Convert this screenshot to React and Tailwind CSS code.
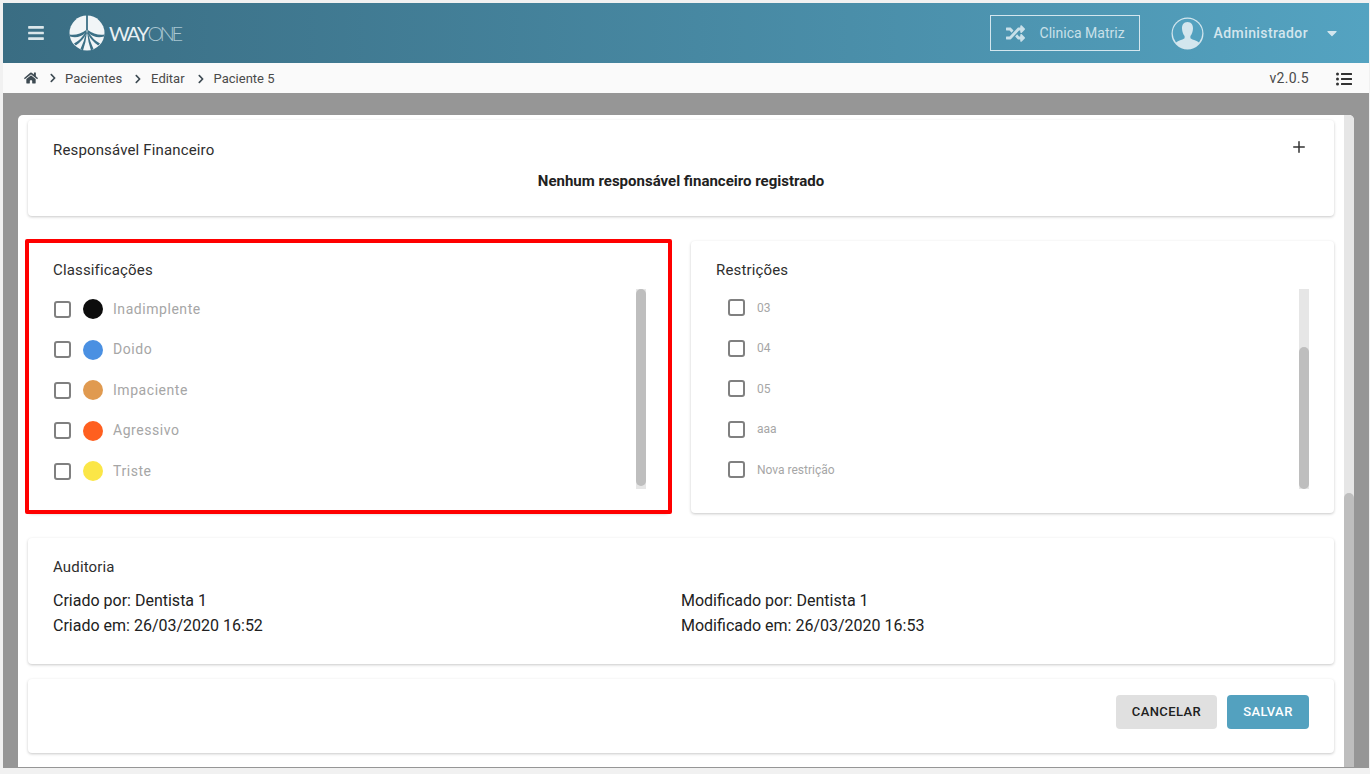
import { Plus } from 'lucide-react';
import { FaBars, FaHome, FaRandom, FaListUl, FaCaretDown, FaChevronRight } from 'react-icons/fa';

const classificacoes = [
  { name: 'Inadimplente', color: 'bg-[#0d0d0d]' },
  { name: 'Doido', color: 'bg-[#4a90e2]' },
  { name: 'Impaciente', color: 'bg-[#e09a50]' },
  { name: 'Agressivo', color: 'bg-[#ff5f1f]' },
  { name: 'Triste', color: 'bg-[#fbe647]' },
];

const restricoes = ['03', '04', '05', 'aaa', 'Nova restrição'];

const Logo = () => (
  <div className="flex items-center">
    <svg width="36" height="36" viewBox="0 0 36 36">
      <circle cx="18" cy="18" r="17.5" fill="#f1f5f7" />
      <path d="M17.1 0 H18.9 V15 H17.1 Z" fill="#3c7086" />
      <path d="M18 14.5 Q9 21 0.5 19.5 L1 21.5 Q10 24 17 17.5 Z" fill="#3c7086" />
      <path d="M18 14.5 Q27 21 35.5 19.5 L35 21.5 Q26 24 19 17.5 Z" fill="#3c7086" />
      <path d="M17.3 16 Q12 25 5 28.5 L6.8 30.5 Q14 25.5 17.7 18 Z" fill="#3c7086" />
      <path d="M18.7 16 Q24 25 31 28.5 L29.2 30.5 Q22 25.5 18.3 18 Z" fill="#3c7086" />
      <path d="M17.3 17 Q15 27 11.5 34 L14 35.5 Q17 27 17.8 18 Z" fill="#3c7086" />
      <path d="M18.7 17 Q21 27 24.5 34 L22 35.5 Q19 27 18.2 18 Z" fill="#3c7086" />
    </svg>
    <span className="ml-[4px] font-['Lato',sans-serif] text-[20px] leading-none tracking-[-2px] text-[#e9f0f3]">WAY</span>
    <span className="font-['Lato',sans-serif] font-light text-[20px] leading-none tracking-[-3.5px] text-[#a9c6d2]">ONE</span>
  </div>
);

const Avatar = () => (
  <svg width="33" height="33" viewBox="0 0 33 33">
    <circle cx="16.5" cy="16.5" r="16" fill="#d3e6ee" />
    <path
      d="M16.5 5 C12.5 5 10.8 8.2 11 11.7 C11.2 14.8 12.3 17.4 13.6 18.9 L13.6 21.2 C11 23 7.2 23.6 5 25.4 A14.8 14.8 0 0 1 1.7 16.5 A14.8 14.8 0 0 1 31.3 16.5 A14.8 14.8 0 0 1 28 25.4 C25.8 23.6 22 23 19.4 21.2 L19.4 18.9 C20.7 17.4 21.8 14.8 22 11.7 C22.2 8.2 20.5 5 16.5 5 Z"
      fill="#53a1bf"
    />
  </svg>
);

const Card = ({ className, children }) => (
  <div className={`bg-white rounded-[4px] shadow-[0_1px_3px_rgba(0,0,0,0.22)] ${className}`}>{children}</div>
);

const Checkbox = () => (
  <span className="block w-[17px] h-[17px] shrink-0 border-2 border-[#808080] rounded-[3px]" />
);

const Crumb = () => <FaChevronRight className="ml-[11px] text-[#3d4a52]" size={10} />;

export default function App() {
  return (
    <div className="w-[1370px] h-[774px] overflow-hidden bg-[#f1f1f1] pt-[3px] pl-[3px] pr-px pb-[6px] flex flex-col font-['Roboto',sans-serif]">
      <header className="h-[60px] shrink-0 flex items-center bg-gradient-to-r from-[#3a6d83] to-[#54a3c1]">
        <FaBars className="ml-[24px] text-[#dbe6ea]" size={18} />
        <div className="ml-[24px]">
          <Logo />
        </div>
        <div className="ml-auto flex items-center">
          <div className="w-[150px] h-[36px] border border-[#d3e6ee] flex items-center text-[#c9e0e9] text-[14px]">
            <FaRandom className="ml-[15px]" size={19} />
            <span className="ml-[15px]">Clinica Matriz</span>
          </div>
          <div className="ml-[31px]">
            <Avatar />
          </div>
          <span className="ml-[10px] text-[14px] font-medium tracking-[0.4px] text-[#d3e6ee]">Administrador</span>
          <FaCaretDown className="ml-[16px] mr-[29px] text-[#d3e6ee]" size={16} />
        </div>
      </header>

      <nav className="h-[30px] shrink-0 bg-[#fafafa] flex items-center pt-[1px] text-[13px] text-[#4a4a4a]">
        <FaHome className="ml-[21px] -mt-[2px] text-[#3d4a52]" size={14} />
        <FaChevronRight className="ml-[10px] -mt-[1px] text-[#3d4a52]" size={10} />
        <span className="ml-[7px]">Pacientes</span>
        <Crumb />
        <span className="ml-[8px]">Editar</span>
        <Crumb />
        <span className="ml-[8px]">Paciente 5</span>
        <span className="ml-auto text-[14px] tracking-[0.3px]">v2.0.5</span>
        <FaListUl className="ml-[27px] mr-[17px] text-[#333]" size={16} />
      </nav>

      <main className="flex-1 min-h-0 bg-[#969696] pt-[22px] pl-[15px] pr-[15px] border-b border-[#969696] flex flex-col">
        <div className="flex-1 min-h-0 bg-white rounded-t-[5px] flex overflow-hidden">
          <div className="flex-1 min-w-0 px-[10px] pt-[5px] flex flex-col text-[#212121]">
            <Card className="h-[96px] shrink-0 flex flex-col px-[25px]">
              <div className="flex justify-between pt-[17px]">
                <h3 className="text-[15px] leading-[26px] tracking-[0.15px] text-[#2e2e2e]">Responsável Financeiro</h3>
                <Plus className="mt-[1px] mr-[1px] text-[#333]" size={18} />
              </div>
              <p className="mt-[8px] text-center text-[15px] font-bold leading-[20px]">Nenhum responsável financeiro registrado</p>
            </Card>

            <div className="mt-[25px] h-[272px] shrink-0 flex gap-[22px]">
              <Card className="relative w-[641px] shrink-0 pl-[25px] pr-[23px] pt-[16px]">
                <h3 className="text-[15px] leading-[26px] tracking-[0.15px] text-[#2e2e2e]">Classificações</h3>
                <div className="mt-[6px] flex">
                  <div className="flex-1 h-[200px] overflow-hidden">
                    {classificacoes.map((c) => (
                      <div key={c.name} className="h-[40.5px] flex items-center pl-[1px]">
                        <Checkbox />
                        <span className={`ml-[12px] w-[20px] h-[20px] rounded-full ${c.color}`} />
                        <span className="ml-[10px] text-[14px] tracking-[0.55px] text-[#a6a6a6]">{c.name}</span>
                      </div>
                    ))}
                  </div>
                  <div className="w-[10px] h-[200px] shrink-0 bg-[#e6e6e6]">
                    <div className="h-[197px] bg-[#bebebe] rounded-[5px]" />
                  </div>
                </div>
                <div className="absolute -left-[3px] -right-[3px] -top-[2px] -bottom-[1px] border-[4px] border-[#ff0000] rounded-[2px] pointer-events-none" />
              </Card>

              <Card className="flex-1 px-[25px] pt-[16px]">
                <h3 className="text-[15px] leading-[26px] tracking-[0.15px] text-[#2e2e2e]">Restrições</h3>
                <div className="mt-[6px] flex">
                  <div className="flex-1 h-[200px] overflow-hidden">
                    <div className="-mt-[1.5px] pl-[12px]">
                      {restricoes.map((r) => (
                        <div key={r} className="h-[40.5px] flex items-center">
                          <Checkbox />
                          <span className="ml-[12px] text-[12px] text-[#a6a6a6]">{r}</span>
                        </div>
                      ))}
                    </div>
                  </div>
                  <div className="w-[10px] h-[200px] shrink-0 bg-[#e6e6e6] flex flex-col">
                    <div className="mt-auto h-[142px] bg-[#bebebe] rounded-[5px]" />
                  </div>
                </div>
              </Card>
            </div>

            <Card className="mt-[25px] h-[126px] shrink-0 px-[25px] pt-[16px]">
              <h3 className="text-[15px] leading-[26px] tracking-[0.15px] text-[#2e2e2e]">Auditoria</h3>
              <div className="mt-[8px] flex text-[16px] leading-[25px]">
                <div className="w-[628px]">
                  <p>Criado por: Dentista 1</p>
                  <p>Criado em: 26/03/2020 16:52</p>
                </div>
                <div>
                  <p>Modificado por: Dentista 1</p>
                  <p>Modificado em: 26/03/2020 16:53</p>
                </div>
              </div>
            </Card>

            <Card className="mt-[15px] h-[74px] shrink-0 flex items-start justify-end gap-[10px] pt-[16px] px-[25px]">
              <button className="w-[101px] h-[34px] rounded-[4px] bg-[#e0e0e0] text-[13px] font-medium tracking-[0.4px] text-[#212121]">CANCELAR</button>
              <button className="w-[82px] h-[34px] rounded-[4px] bg-[#53a1bf] text-[13px] font-medium tracking-[0.4px] text-white">SALVAR</button>
            </Card>
          </div>

          <div className="w-[10px] shrink-0 bg-[#e6e6e6] flex flex-col">
            <div className="mt-auto h-[274px] bg-[#bebebe] rounded-t-[5px]" />
          </div>
        </div>
      </main>
    </div>
  );
}
